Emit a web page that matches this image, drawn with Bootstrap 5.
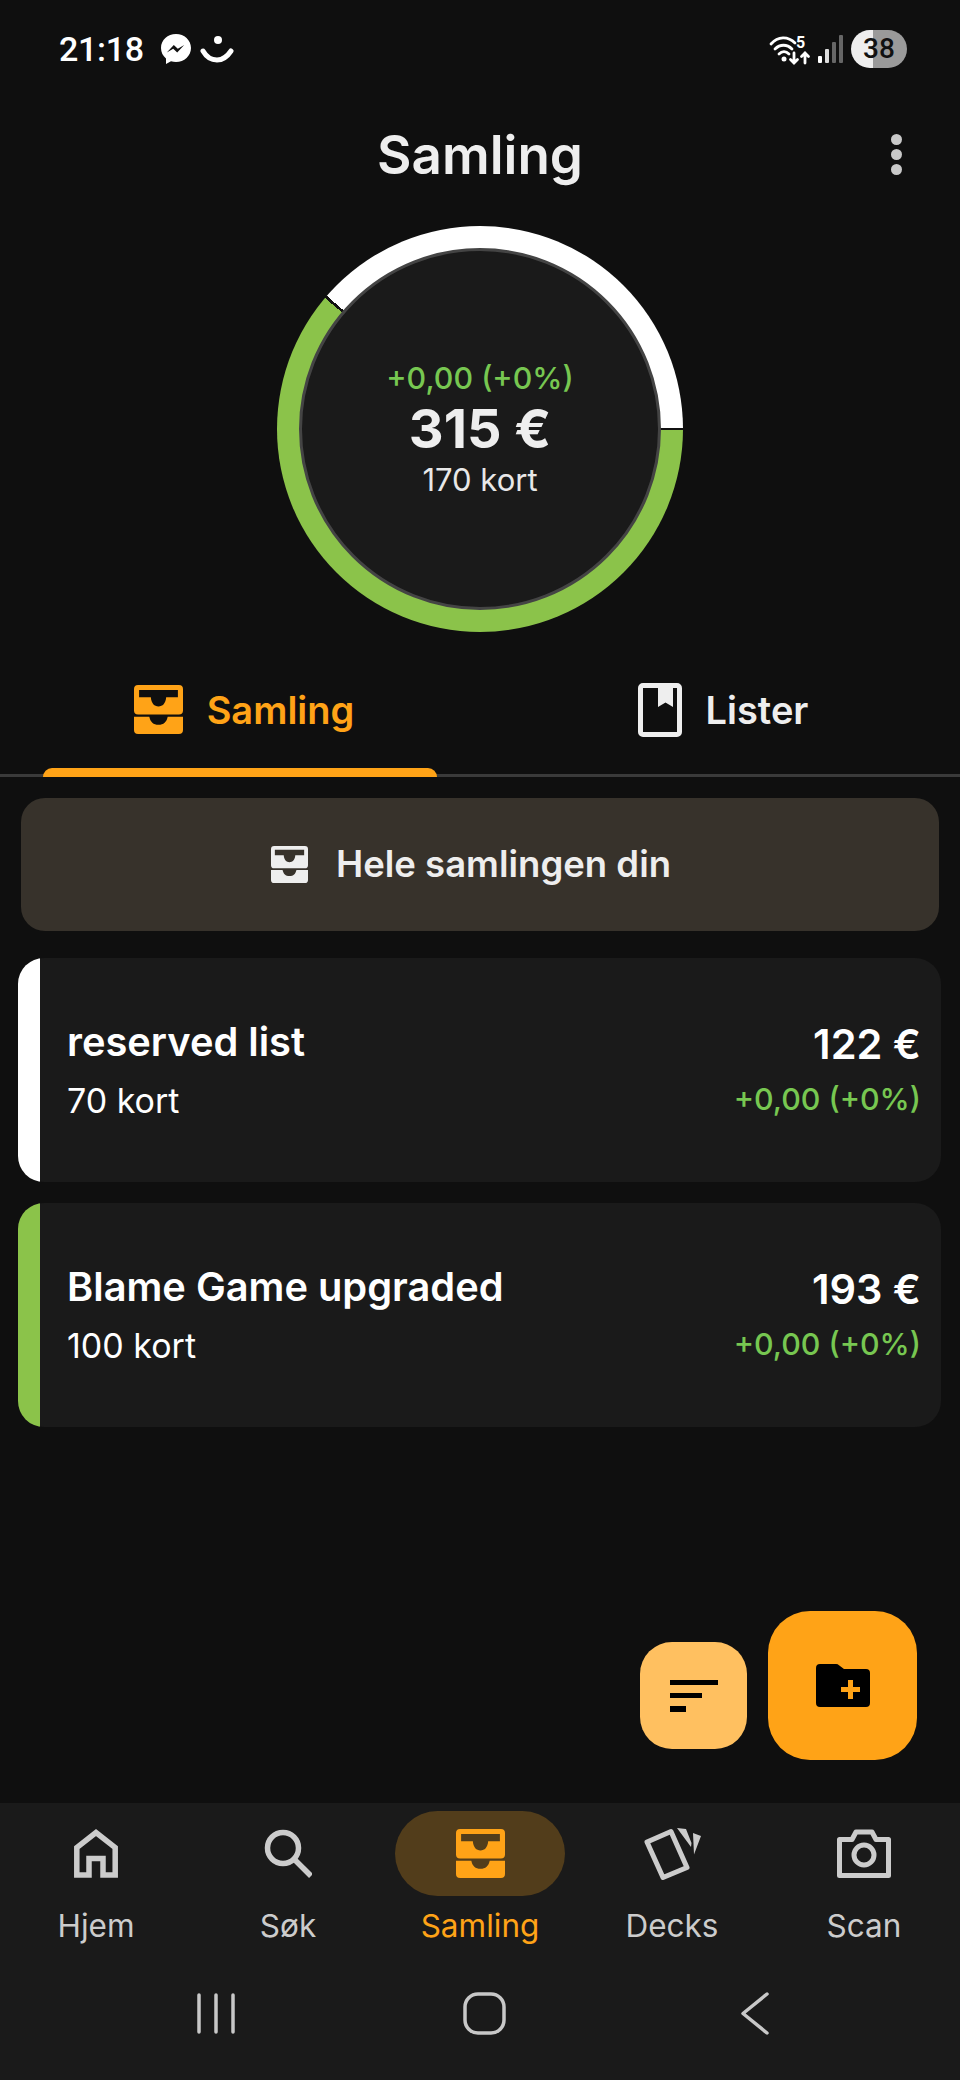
<!DOCTYPE html>
<html lang="no">
<head>
<meta charset="utf-8">
<title>Samling</title>
<link href="https://cdn.jsdelivr.net/npm/bootstrap@5.3.0/dist/css/bootstrap.min.css" rel="stylesheet">
<style>
html,body{margin:0;background:#0f0f0f}
.app-shell{width:960px;height:2080px;background:#0f0f0f;color:#eee;font-family:Inter,"Liberation Sans",sans-serif;overflow:hidden}
.status-row{height:98px;padding:0 53px 0 59px}
.status-time{font-family:Roboto,Inter,sans-serif;font-weight:500;font-size:34px;color:#fff;line-height:1;letter-spacing:-.3px}
.batt-pill{width:56px;height:38px;border-radius:19px;background:linear-gradient(90deg,#eee 0 22px,#9a9a9a 22px);color:#111;font-family:Roboto,sans-serif;font-weight:500;font-size:28px;line-height:1}
.wifi-ico{overflow:visible}
.top-bar{height:114px}
.top-title{font-size:53px;font-weight:600;color:#eee;line-height:1;margin:0}
.kebab-btn{top:36px;left:891px;width:11px}
.kebab-btn i{display:block;width:11px;height:11px;border-radius:50%;background:#c9c9c9}
.ring-wrap{margin-top:14px;height:406px}
.ring-outer{width:406px;height:406px;padding:22px;background:conic-gradient(#fff 0deg 89.6deg,#111 89.6deg 90.4deg,#8bc34a 90.4deg 310.2deg,#111 310.2deg 311deg,#fff 311deg 360deg)}
.ring-inner{width:100%;height:100%;background:#1a1a1a;border:3px solid #444}
.gain-big{font-size:30.400px;color:#77c751;line-height:34px;font-weight:500}
.total-big{font-size:54px;font-weight:700;color:#eee;line-height:68px}
.count-big{font-size:31px;color:#e8e8e8;line-height:34px;font-weight:400}
.tabs-bar{height:145px;border-bottom:3px solid #3a3a3a}
.tab-item{width:480px;padding-top:13px;height:142px;font-size:38px;font-weight:600;line-height:1;color:#eee}
.tab-item.on{color:#ffa317;padding-left:8px}
.tab-item.off{padding-left:6px}
.tab-mark{left:43px;bottom:-3px;width:394px;height:9px;background:#ffa317;border-radius:9px 9px 0 0}
.all-btn{margin:21px 21px 0;height:133px;width:918px;padding-right:30px;background:#37322b;border:0;border-radius:24px;color:#eee;font-size:36.500px;font-weight:600;font-family:inherit;gap:28px}
.all-btn:hover,.all-btn:active{background:#37322b;color:#eee}
.deck-card{margin:0 19px 0 18px;height:224px;background:#1a1a1a;border:0;border-radius:26px;overflow:hidden;color:#fff;flex-direction:row}
.deck-first{margin-top:27px}
.deck-next{margin-top:21px}
.deck-stripe{width:22px}
.stripe-green{background:#8bc34a}
.deck-body{padding:0 20px 0 27px}
.deck-name{font-size:39.800px;font-weight:600;line-height:46px}
.deck-count{font-size:34px;font-weight:400;line-height:40px;margin-top:16px}
.deck-side{margin-top:-1px}
.deck-price{font-size:41.500px;font-weight:600;line-height:46px}
.deck-gain{font-size:30.400px;font-weight:500;color:#77c751;line-height:40px;margin-top:12px}
.fab-row{padding:0 43px 43px 0;gap:21px}
.fab-small{width:107px;height:107px;border-radius:32px;background:#ffc060;margin-bottom:11px}
.fab-big{width:149px;height:149px;border-radius:42px;background:#ffa317}
.bottom-wrap{height:277px;background:#1a1a1a}
.dest-col{height:167px;padding-top:8px;font-size:31.500px;color:#ccc;line-height:1}
.dest-col.on{color:#ffa317}
.dest-icon{width:170px;height:85px;border-radius:43px;margin-bottom:14px}
.dest-col.on .dest-icon{background:#523d1b}
.sys-row{height:110px;padding:0 0 24px 6px}
.sys-mid{margin:0 235px 0 228px}
</style>
</head>
<body>
<div class="app-shell d-flex flex-column position-relative">

  <div class="status-row d-flex align-items-center justify-content-between">
    <div class="d-flex align-items-center">
      <span class="status-time">21:18</span>
      <svg class="ms-3" width="32" height="32" viewBox="0 0 32 32"><path fill="#fff" d="M16 1C7.700 1 1 7 1 15c0 4.300 1.900 7.900 5 10.500V31l5-2.800c1.600.5 3.300.8 5 .8 8.300 0 15-6.200 15-14S24.300 1 16 1z"/><path fill="#111" d="M6.800 19.500l7-7.500 4 3.700 6.400-3.700-7 7.500-4-3.700z"/></svg>
      <svg class="ms-2" width="34" height="34" viewBox="0 0 34 34"><circle cx="18" cy="8" r="4" fill="#fff"/><path fill="none" stroke="#fff" stroke-width="5" stroke-linecap="round" d="M3 19c4 7 9 9 14 9s10-3 14-9"/></svg>
    </div>
    <div class="d-flex align-items-center">
      <svg class="wifi-ico" width="40" height="36" viewBox="0 0 40 36"><g fill="none" stroke="#fff" stroke-width="2.800" stroke-linecap="round"><path d="M2 13C9 5 19 5 26 12"/><path d="M6 18c5-5 12-5 17 0"/><path d="M10 23c3-3 7-3 10 0"/><path d="M25 22v10m-3.500-3.500L25 32l3.500-3.500"/><path d="M36 32v-10m-3.500 3.500L36 22l3.500 3.500"/></g><circle cx="15" cy="28" r="2.500" fill="#fff"/><text x="27" y="17" font-family="Roboto,sans-serif" font-size="16" font-weight="700" fill="#fff">5</text></svg>
      <svg class="ms-2" width="26" height="28" viewBox="0 0 26 28"><rect x="1" y="21" width="4" height="7" rx="1" fill="#fff"/><rect x="8" y="14" width="4" height="14" rx="1" fill="#ddd"/><rect x="15" y="7" width="4" height="21" rx="1" fill="#666"/><rect x="22" y="0" width="4" height="28" rx="1" fill="#666"/></svg>
      <span class="batt-pill ms-2 d-flex align-items-center justify-content-center">38</span>
    </div>
  </div>

  <div class="top-bar d-flex align-items-center justify-content-center position-relative">
    <h1 class="top-title">Samling</h1>
    <div class="kebab-btn position-absolute d-flex flex-column gap-1"><i></i><i></i><i></i></div>
  </div>

  <div class="ring-wrap d-flex justify-content-center">
    <div class="ring-outer rounded-circle">
      <div class="ring-inner rounded-circle d-flex flex-column align-items-center justify-content-center">
        <div class="gain-big">+0,00 (+0%)</div>
        <div class="total-big">315 €</div>
        <div class="count-big">170 kort</div>
      </div>
    </div>
  </div>

  <div class="tabs-bar d-flex position-relative">
    <div class="tab-item on d-flex align-items-center justify-content-center gap-4">
      <svg width="49" height="49" viewBox="0 0 48 48"><use href="#tray"/></svg>
      <span>Samling</span>
    </div>
    <div class="tab-item off d-flex align-items-center justify-content-center gap-4">
      <svg width="44" height="54" viewBox="0 0 44 54"><path fill="currentColor" fill-rule="evenodd" d="M5 0H39a5 5 0 0 1 5 5V49a5 5 0 0 1-5 5H5a5 5 0 0 1-5-5V5a5 5 0 0 1 5-5zM5 5V49H39V5H35V24L27.500 19.500 20 24V5z"/></svg>
      <span>Lister</span>
    </div>
    <div class="tab-mark position-absolute"></div>
  </div>

  <button class="btn all-btn d-flex align-items-center justify-content-center">
    <svg width="37" height="37" viewBox="0 0 48 48"><use href="#tray"/></svg>
    <span>Hele samlingen din</span>
  </button>

  <div class="card deck-card deck-first d-flex">
    <div class="deck-stripe bg-white"></div>
    <div class="deck-body flex-fill d-flex justify-content-between align-items-center">
      <div><div class="deck-name">reserved list</div><div class="deck-count">70 kort</div></div>
      <div class="text-end deck-side"><div class="deck-price">122 €</div><div class="deck-gain">+0,00 (+0%)</div></div>
    </div>
  </div>
  <div class="card deck-card deck-next d-flex">
    <div class="deck-stripe stripe-green"></div>
    <div class="deck-body flex-fill d-flex justify-content-between align-items-center">
      <div><div class="deck-name">Blame Game upgraded</div><div class="deck-count">100 kort</div></div>
      <div class="text-end deck-side"><div class="deck-price">193 €</div><div class="deck-gain">+0,00 (+0%)</div></div>
    </div>
  </div>

  <div class="flex-fill d-flex align-items-end justify-content-end fab-row">
    <div class="fab-small d-flex align-items-center justify-content-center">
      <svg width="48" height="32" viewBox="0 0 48 32"><rect width="48" height="5"/><rect y="13" width="32" height="5"/><rect y="26" width="16" height="6"/></svg>
    </div>
    <div class="fab-big d-flex align-items-center justify-content-center">
      <svg width="54" height="43" viewBox="0 0 54 43"><path d="M4 0H20a4 4 0 0 1 3 1.300L28 5H50a4 4 0 0 1 4 4V39a4 4 0 0 1-4 4H4a4 4 0 0 1-4-4V4a4 4 0 0 1 4-4z"/><path fill="#ffa317" d="M32 16h5v7h7v5h-7v7h-5v-7h-7v-5h7z"/></svg>
    </div>
  </div>

  <div class="bottom-wrap">
    <div class="row g-0">
      <div class="col dest-col d-flex flex-column align-items-center">
        <div class="dest-icon d-flex align-items-center justify-content-center">
          <svg width="44" height="49" viewBox="0 0 44 49"><path fill="none" stroke="#ccc" stroke-width="5.500" stroke-miterlimit="10" d="M2.800 46V18.500L22 3.500l19.200 15V46H29V29.500H15V46z"/></svg>
        </div>
        <span>Hjem</span>
      </div>
      <div class="col dest-col d-flex flex-column align-items-center">
        <div class="dest-icon d-flex align-items-center justify-content-center">
          <svg width="48" height="49" viewBox="0 0 48 49"><circle cx="19" cy="19" r="15.500" fill="none" stroke="#ccc" stroke-width="5.500"/><path stroke="#ccc" stroke-width="5.500" d="M30 30l17 17"/></svg>
        </div>
        <span>Søk</span>
      </div>
      <div class="col dest-col on d-flex flex-column align-items-center">
        <div class="dest-icon d-flex align-items-center justify-content-center">
          <svg width="49" height="49" viewBox="0 0 48 48"><use href="#tray"/></svg>
        </div>
        <span>Samling</span>
      </div>
      <div class="col dest-col d-flex flex-column align-items-center">
        <div class="dest-icon d-flex align-items-center justify-content-center">
          <svg width="57" height="52" viewBox="0 0 57 52"><path fill="none" stroke="#ccc" stroke-width="5" stroke-linejoin="round" d="M3 14L27 3.500l16 36-24 10z"/><path fill="#ccc" d="M33 0l9 1 5.500 14-.5 4zM49 5l8 3-7 18.500z"/></svg>
        </div>
        <span>Decks</span>
      </div>
      <div class="col dest-col d-flex flex-column align-items-center">
        <div class="dest-icon d-flex align-items-center justify-content-center">
          <svg width="54" height="49" viewBox="0 0 54 49"><path fill="none" stroke="#ccc" stroke-width="5" stroke-linejoin="round" d="M2.500 10.500H15L19 3H35L39 10.500H51.500V46.500H2.500z"/><circle cx="27" cy="26" r="10" fill="none" stroke="#ccc" stroke-width="5"/></svg>
        </div>
        <span>Scan</span>
      </div>
    </div>
    <div class="sys-row d-flex align-items-center justify-content-center">
      <svg width="38" height="41" viewBox="0 0 38 41"><path stroke="#c8c8c8" stroke-width="3.500" stroke-linecap="round" d="M2 2v37M19 2v37M36 2v37"/></svg>
      <svg class="sys-mid" width="43" height="43" viewBox="0 0 43 43"><rect x="2" y="2" width="39" height="39" rx="13" fill="none" stroke="#c8c8c8" stroke-width="3.500"/></svg>
      <svg width="28" height="43" viewBox="0 0 28 43"><path fill="none" stroke="#c8c8c8" stroke-width="3.500" stroke-linecap="round" stroke-linejoin="round" d="M26 2L2 21.500 26 41"/></svg>
    </div>
  </div>

  <svg width="0" height="0" class="d-block position-absolute"><defs>
    <g id="tray"><path fill="currentColor" fill-rule="evenodd" d="M4 0H44a4 4 0 0 1 4 4V25a4 4 0 0 1-4 4H4a4 4 0 0 1-4-4V4a4 4 0 0 1 4-4zM5 5V12H16.500C17 18 20 21 24 21s7-3 7.500-9H43V5z"/><path fill="currentColor" d="M0 31H15C16 36 19 39 24 39s8-3 9-8H48V44a4 4 0 0 1-4 4H4a4 4 0 0 1-4-4z"/></g>
  </defs></svg>
</div>
<script src="https://cdn.jsdelivr.net/npm/bootstrap@5.3.0/dist/js/bootstrap.bundle.min.js"></script>
</body>
</html>
